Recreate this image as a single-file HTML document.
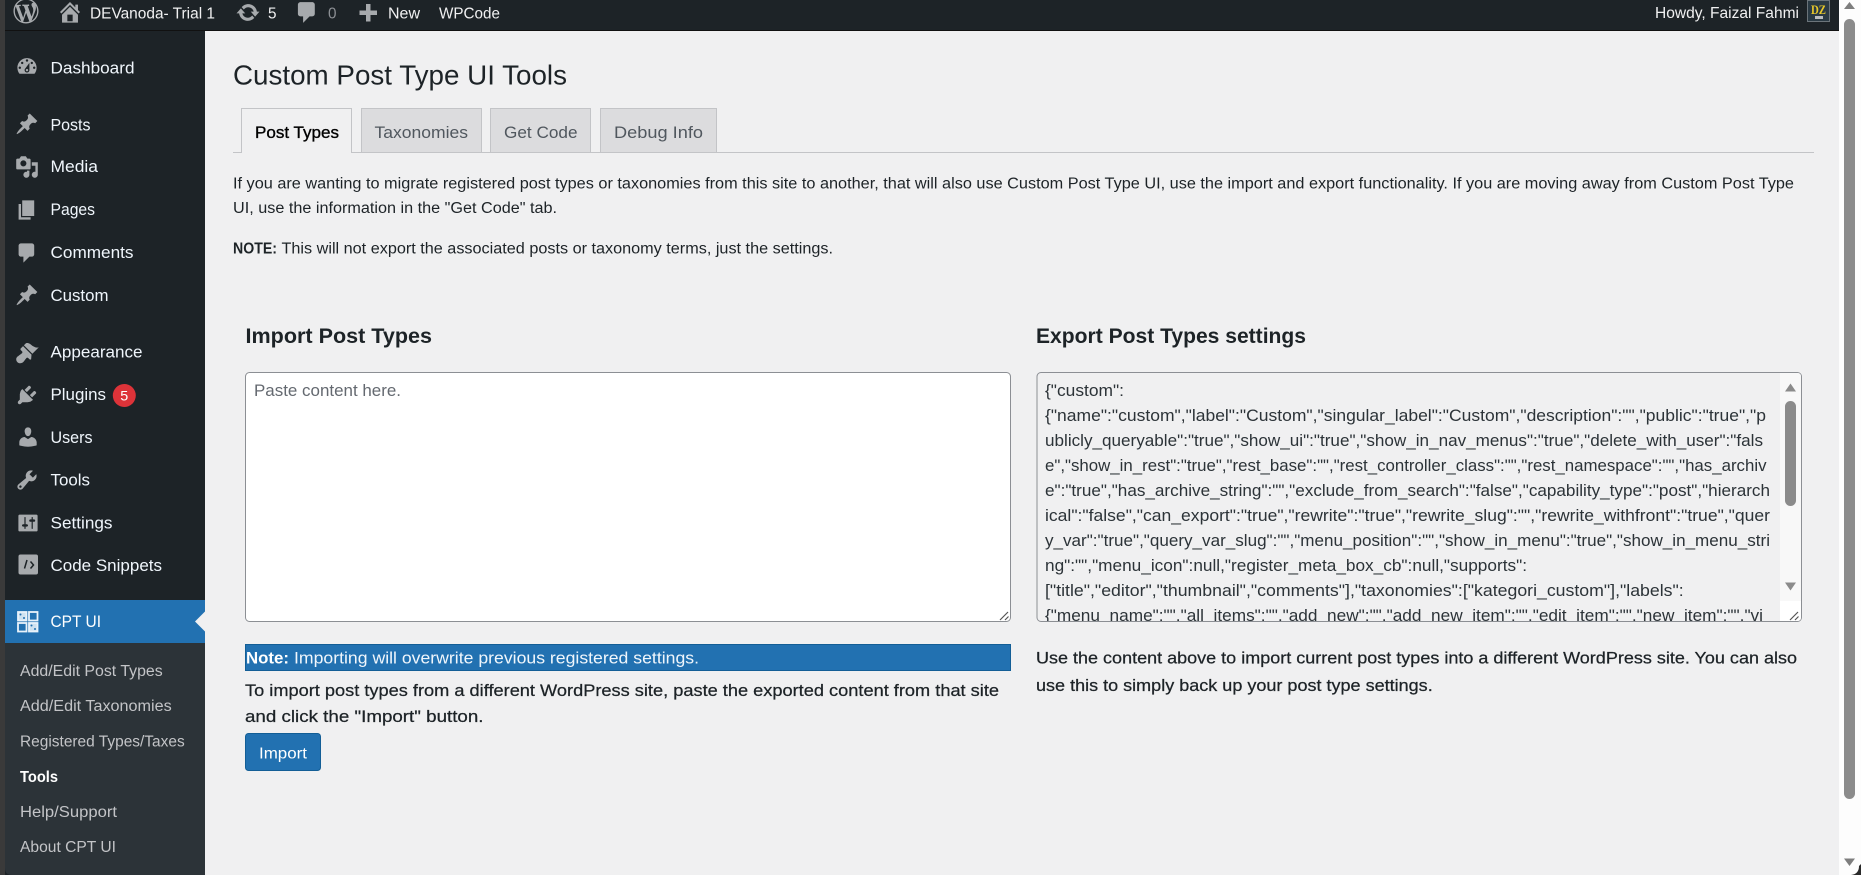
<!DOCTYPE html>
<html lang="en"><head><meta charset="utf-8"><title>Custom Post Type UI Tools</title>
<style>
html,body{margin:0;padding:0;width:1861px;height:875px;overflow:hidden;background:#f0f0f1}
svg{display:block;position:absolute;left:0;top:0}
text{font-family:"Liberation Sans",Arial,sans-serif;white-space:pre}
.m{font-size:17px;fill:#f0f6fc}
.s{font-size:15.5px;fill:#c3c4c7}
.a{font-size:15.5px;fill:#f0f0f1}
.p{font-size:15.5px;fill:#1d2327}
.t{font-size:17px;fill:#50575e}
.c{font-size:16.5px;fill:#2c3338}
.b{font-size:17px;fill:#1d2327}
.i{fill:#a7aaad}
</style></head><body>
<svg xmlns="http://www.w3.org/2000/svg" width="1861" height="875" viewBox="0 0 1861 875">
<defs><clipPath id="ta"><rect x="1038" y="373" width="742" height="248"/></clipPath></defs>
<rect width="1861" height="875" fill="#f0f0f1"/>
<!-- sidebar -->
<rect x="0" y="0" width="5" height="875" fill="#3a3a3a"/>
<rect x="5" y="0" width="200" height="875" fill="#1d2327"/>
<path d="M5 643H205V875H12Q5 875 5 868Z" fill="#2c3338"/>
<rect x="5" y="600" width="200" height="43" fill="#2271b1"/>
<path d="M205 611.500L195 621.500L205 631.500Z" fill="#f0f0f1"/>
<!-- admin bar -->
<rect x="5" y="0" width="1834" height="30.500" fill="#1d2327"/>
<rect x="5" y="30" width="1834" height="1" fill="#111"/>
<!-- admin bar icons -->
<svg x="13.500" y="-1.500" width="25" height="25" viewBox="0 0 20 20" class="i"><path d="M20 10c0-5.510-4.490-10-10-10C4.480 0 0 4.490 0 10c0 5.520 4.480 10 10 10 5.510 0 10-4.480 10-10zM7.780 15.370L4.370 6.220c.55-.02 1.170-.08 1.170-.08.5-.06.44-1.130-.06-1.110 0 0-1.450.11-2.370.11-.18 0-.37 0-.58-.01C4.120 2.690 6.890 1.030 10 1.030c2.320 0 4.430.87 6.020 2.340-.68-.11-1.650.39-1.650 1.580 0 .74.45 1.360.9 2.100.35.61.55 1.360.55 2.460 0 1.490-1.400 5-1.400 5l-3.030-8.370c.54-.02.82-.17.82-.17.5-.05.44-1.250-.06-1.220 0 0-1.440.12-2.380.12-.87 0-2.330-.12-2.330-.12-.5-.03-.56 1.200-.06 1.220l.92.08 1.260 3.410zM17.410 10c.24-.64.74-1.870.43-4.250.7 1.290 1.050 2.710 1.050 4.250 0 3.290-1.730 6.240-4.400 7.780.97-2.590 1.940-5.200 2.920-7.780zM6.100 18.090C3.120 16.650 1.110 13.530 1.110 10c0-1.300.23-2.480.72-3.590C3.250 10.300 4.670 14.200 6.100 18.090zm4.030-6.630l2.580 6.980c-.86.29-1.760.45-2.710.45-.79 0-1.570-.11-2.290-.33.81-2.380 1.620-4.740 2.420-7.100z"/></svg>
<svg x="56.700" y="-1.300" width="26.600" height="26.600" viewBox="0 0 20 20" class="i"><path d="M16 8.500l1.530 1.530-1.060 1.060L10 4.620l-6.470 6.470-1.060-1.060L10 2.500l4 4v-2h2v4zm-6-2.460l6 5.990V18H4v-5.970zM12 17v-5H8v5h4z"/></svg>
<svg x="235.500" y="0" width="25" height="25" viewBox="0 0 20 20" class="i"><path d="M10.200 3.280c3.530 0 6.430 2.610 6.920 6h2.080l-3.500 4-3.500-4h2.320c-.45-1.970-2.210-3.440-4.320-3.440-1.450 0-2.730.71-3.540 1.780L4.950 5.660C6.230 4.200 8.110 3.280 10.200 3.280zm-.4 13.440c-3.520 0-6.430-2.610-6.920-6H.8l3.500-4c1.170 1.330 2.330 2.670 3.500 4H5.480c.45 1.970 2.210 3.440 4.320 3.440 1.450 0 2.730-.71 3.540-1.780l1.710 1.950c-1.280 1.460-3.150 2.390-5.250 2.390z"/></svg>
<svg x="294" y="-0.500" width="26" height="26" viewBox="0 0 20 20" class="i"><path d="M5 2h9c1.100 0 2 .9 2 2v7c0 1.100-.9 2-2 2h-2l-5 5v-5H5c-1.100 0-2-.9-2-2V4c0-1.100.9-2 2-2z"/></svg>
<path d="M366 4h4.500v6.500H377v4.500h-6.500v6.500H366V15h-6.500v-4.500H366z" class="i"/>
<!-- admin bar text -->
<text class="a" x="90" y="18.500" textLength="125" lengthAdjust="spacingAndGlyphs">DEVanoda- Trial 1</text>
<text class="a" x="268" y="18.500" textLength="8.500" lengthAdjust="spacingAndGlyphs">5</text>
<text class="a" x="328" y="18.500" textLength="8.500" lengthAdjust="spacingAndGlyphs" style="fill:#8c8f94">0</text>
<text class="a" x="388" y="18.500" textLength="32" lengthAdjust="spacingAndGlyphs">New</text>
<text class="a" x="439" y="18.500" textLength="61" lengthAdjust="spacingAndGlyphs">WPCode</text>
<text class="a" x="1655" y="18" textLength="144" lengthAdjust="spacingAndGlyphs">Howdy, Faizal Fahmi</text>
<rect x="1807.500" y="0.500" width="22" height="21" fill="#2a3a44" stroke="#6b747a"/>
<text x="1811" y="14" style="font-family:'Liberation Serif',serif;font-weight:bold;font-size:13px;fill:#e8c92a" textLength="15" lengthAdjust="spacingAndGlyphs">DZ</text>
<rect x="1815" y="16" width="8" height="3" fill="#b9bcbe"/>
<!-- scrollbar -->
<rect x="1839" y="0" width="22" height="875" fill="#fdfdfd"/>
<rect x="1844" y="19" width="11" height="780" rx="5.500" fill="#8b8b8b"/>
<path d="M1849.500 2L1855 9H1844Z" fill="#7e7e7e"/>
<path d="M1844 858.500H1855L1849.500 866Z" fill="#7e7e7e"/>
<path d="M1861 864V875H1851Q1859 874 1859 866Z" fill="#2a2a2a"/>
<!-- menu icons -->
<g class="i">
<svg x="15" y="54.500" width="24" height="24" viewBox="0 0 20 20"><path d="M3.760 16h12.480c1.100-1.370 1.760-3.110 1.760-5 0-4.420-3.580-8-8-8s-8 3.580-8 8c0 1.890.66 3.630 1.760 5zM10 4c.55 0 1 .45 1 1s-.45 1-1 1-1-.45-1-1 .45-1 1-1zM6 6c.55 0 1 .45 1 1s-.45 1-1 1-1-.45-1-1 .45-1 1-1zm8 0c.55 0 1 .45 1 1s-.45 1-1 1-1-.45-1-1 .45-1 1-1zm-5.370 5.550L12 7v6c0 1.100-.9 2-2 2s-2-.9-2-2c0-.57.24-1.080.63-1.450zM4 10c.55 0 1 .45 1 1s-.45 1-1 1-1-.45-1-1 .45-1 1-1zm12 0c.55 0 1 .45 1 1s-.45 1-1 1-1-.45-1-1 .45-1 1-1zm-5 3c0-.55-.45-1-1-1s-1 .45-1 1 .45 1 1 1 1-.45 1-1z" fill-rule="evenodd"/></svg>
<svg x="15" y="112" width="24" height="24" viewBox="0 0 20 20"><path id="pin" d="M10.440 3.020l1.820-1.820 6.360 6.350-1.830 1.820c-1.050-.68-2.480-.57-3.410.36l-.75.75c-.92.93-1.040 2.350-.35 3.410l-1.830 1.820-2.410-2.410-2.800 2.790c-.42.42-3.380 2.710-3.800 2.290s1.860-3.390 2.280-3.810l2.790-2.790L4.100 9.360l1.830-1.820c1.050.69 2.480.57 3.400-.36l.75-.75c.93-.92 1.050-2.350.36-3.410z"/></svg>
<svg x="15" y="155" width="24" height="24" viewBox="0 0 20 20"><path d="M13 11V4c0-.55-.45-1-1-1h-1.670L9 1H5L3.670 3H2c-.55 0-1 .45-1 1v7c0 .55.45 1 1 1h10c.55 0 1-.45 1-1zM7 4.500c1.380 0 2.500 1.120 2.500 2.500S8.380 9.500 7 9.500 4.500 8.380 4.500 7 5.620 4.500 7 4.500zM14 6h5v10.500c0 1.380-1.120 2.500-2.500 2.500S14 17.880 14 16.500s1.120-2.500 2.500-2.500c.17 0 .34.020.5.050V9h-3V6zm-4 8.050V13h2v3.500c0 1.380-1.120 2.500-2.500 2.500S7 17.880 7 16.500 8.120 14 9.500 14c.17 0 .34.020.5.050z" fill-rule="evenodd"/></svg>
<svg x="15" y="198" width="24" height="24" viewBox="0 0 20 20"><path d="M6 15V2h10v13H6zm-1 1h8v2H3V5h2v11z"/></svg>
<svg x="15" y="241" width="24" height="24" viewBox="0 0 20 20"><path d="M5 2h9c1.100 0 2 .9 2 2v7c0 1.100-.9 2-2 2h-2l-5 5v-5H5c-1.100 0-2-.9-2-2V4c0-1.100.9-2 2-2z"/></svg>
<svg x="15" y="283" width="24" height="24" viewBox="0 0 20 20"><path d="M10.440 3.020l1.820-1.820 6.360 6.350-1.830 1.820c-1.050-.68-2.480-.57-3.410.36l-.75.75c-.92.93-1.040 2.350-.35 3.410l-1.830 1.820-2.410-2.410-2.800 2.790c-.42.42-3.380 2.710-3.800 2.290s1.860-3.390 2.280-3.810l2.790-2.790L4.100 9.360l1.830-1.820c1.050.69 2.480.57 3.400-.36l.75-.75c.93-.92 1.050-2.350.36-3.410z"/></svg>
<svg x="15" y="340.500" width="24" height="24" viewBox="0 0 20 20"><path d="M14.480 11.060L7.410 3.990l1.500-1.500c.5-.56 2.300-.47 3.510.32 1.210.8 1.430 1.280 2.910 2.100 1.180.64 2.450 1.260 4.450.85zm-.71.710L6.700 4.700 4.830 6.580c-.39.39-.39 1.020 0 1.410l1.060 1.060c.39.39.39 1.030 0 1.420-.6.600-1.430 1.110-2.210 1.690-.35.26-.7.530-1.010.84C1.430 13.710 1 14.650 1 15.650 1 17.500 2.500 19 4.350 19c.95 0 1.940-.43 2.670-1.170.31-.31.58-.66.84-1.010.58-.78 1.090-1.610 1.690-2.210.39-.39 1.030-.39 1.420 0l1.060 1.060c.39.39 1.020.39 1.410 0z"/></svg>
<svg x="15" y="383" width="24" height="24" viewBox="0 0 20 20"><path d="M13.110 4.360L9.870 7.600 8 5.730l3.240-3.240c.35-.34 1.050-.2 1.560.32.52.51.66 1.210.31 1.550zm-8 1.770l.91-1.120 9.010 9.010-1.190.84c-.71.71-2.630 1.160-3.820 1.160H6.140L4.900 17.260c-.59.590-1.540.590-2.120 0-.59-.58-.59-1.530 0-2.120l1.240-1.240v-3.880c0-1.130.52-3.130 1.090-3.890zm7.260 3.970l3.240-3.240c.34-.35 1.040-.21 1.550.31.52.51.66 1.210.32 1.560l-3.240 3.240z"/></svg>
<svg x="16" y="425" width="24" height="24" viewBox="0 0 20 20"><path d="M10 9.250c-2.270 0-2.730-3.440-2.730-3.440C7 4.020 7.820 2 9.970 2c2.160 0 2.980 2.020 2.710 3.810 0 0-.41 3.440-2.680 3.440zm0 2.570L12.720 10c2.390 0 4.520 2.330 4.520 4.530v2.490s-3.650 1.130-7.240 1.130c-3.650 0-7.240-1.130-7.240-1.130v-2.490c0-2.250 1.940-4.480 4.470-4.480z"/></svg>
<svg x="15" y="468" width="24" height="24" viewBox="0 0 20 20"><path d="M16.680 9.770c-1.340 1.340-3.300 1.670-4.950.99l-5.410 6.520c-.99.99-2.590.99-3.570 0-.99-.98-.99-2.580 0-3.570l6.520-5.420c-.68-1.650-.35-3.610.99-4.950 1.280-1.280 3.120-1.620 4.720-1.060l-2.890 2.890 2.820 2.820 2.860-2.870c.53 1.580.18 3.400-1.090 4.650zM3.810 16.210c.4.390 1.030.39 1.420 0 .4-.4.4-1.030 0-1.430-.39-.39-1.020-.39-1.420 0-.39.4-.39 1.030 0 1.430z" fill-rule="evenodd"/></svg>
<svg x="16" y="511" width="24" height="24" viewBox="0 0 20 20"><path d="M18 16V4c0-.55-.45-1-1-1H3c-.55 0-1 .45-1 1v12c0 .55.45 1 1 1h14c.55 0 1-.45 1-1zM8 11h1c.55 0 1 .45 1 1s-.45 1-1 1H8v1.500c0 .28-.22.5-.5.5s-.5-.22-.5-.5V13H6c-.55 0-1-.45-1-1s.45-1 1-1h1V5.500c0-.28.22-.5.5-.5s.5.22.5.5V11zm5-2h-1c-.55 0-1-.45-1-1s.45-1 1-1h1V5.500c0-.28.22-.5.5-.5s.5.22.5.5V7h1c.55 0 1 .45 1 1s-.45 1-1 1h-1v5.500c0 .28-.22.5-.5.5s-.5-.22-.5-.5V9z" fill-rule="evenodd"/></svg>
<rect x="18.500" y="554.500" width="19.500" height="20" rx="2"/>
</g>
<path d="M27 560l-2.500 8.500M30.500 561.500l3 3.500-3 3.500" stroke="#1d2327" stroke-width="1.500" fill="none"/>
<!-- CPT UI icon -->
<g fill="none" stroke="#e8f2fa" stroke-width="1.800">
<rect x="18" y="612" width="8.500" height="8.500" fill="#cfe2f0"/><rect x="29" y="612" width="8.500" height="8.500"/>
<rect x="18" y="623" width="8.500" height="8.500"/><rect x="29" y="623" width="8.500" height="8.500" fill="#cfe2f0"/>
</g>
<g fill="#2271b1"><circle cx="20.500" cy="614.500" r="1"/><circle cx="24" cy="618" r="1"/><circle cx="31.500" cy="625.500" r="1"/><circle cx="35" cy="629" r="1"/></g>
<!-- menu text -->
<text class="m" x="50.500" y="73.500" textLength="84" lengthAdjust="spacingAndGlyphs">Dashboard</text>
<text class="m" x="50.500" y="130.500" textLength="40" lengthAdjust="spacingAndGlyphs">Posts</text>
<text class="m" x="50.500" y="172" textLength="47.500" lengthAdjust="spacingAndGlyphs">Media</text>
<text class="m" x="50.500" y="215" textLength="44.500" lengthAdjust="spacingAndGlyphs">Pages</text>
<text class="m" x="50.500" y="258" textLength="83" lengthAdjust="spacingAndGlyphs">Comments</text>
<text class="m" x="50.500" y="301" textLength="58" lengthAdjust="spacingAndGlyphs">Custom</text>
<text class="m" x="50.500" y="357.500" textLength="92" lengthAdjust="spacingAndGlyphs">Appearance</text>
<text class="m" x="50.500" y="400" textLength="55.500" lengthAdjust="spacingAndGlyphs">Plugins</text>
<circle cx="124.300" cy="395.500" r="11.500" fill="#dd3339"/>
<text x="120.300" y="400.500" style="font-size:13.500px;fill:#fff" textLength="8" lengthAdjust="spacingAndGlyphs">5</text>
<text class="m" x="50.500" y="443" textLength="42" lengthAdjust="spacingAndGlyphs">Users</text>
<text class="m" x="50.500" y="485.500" textLength="39.500" lengthAdjust="spacingAndGlyphs">Tools</text>
<text class="m" x="50.500" y="528.500" textLength="62" lengthAdjust="spacingAndGlyphs">Settings</text>
<text class="m" x="50.500" y="571" textLength="111.500" lengthAdjust="spacingAndGlyphs">Code Snippets</text>
<text class="m" x="50.500" y="627" textLength="50.500" lengthAdjust="spacingAndGlyphs" style="fill:#fff">CPT UI</text>
<text class="s" x="20" y="676" textLength="142.700" lengthAdjust="spacingAndGlyphs">Add/Edit Post Types</text>
<text class="s" x="20" y="711" textLength="151.700" lengthAdjust="spacingAndGlyphs">Add/Edit Taxonomies</text>
<text class="s" x="20" y="746.500" textLength="164.700" lengthAdjust="spacingAndGlyphs">Registered Types/Taxes</text>
<text class="s" x="20" y="782" textLength="38" lengthAdjust="spacingAndGlyphs" style="fill:#fff;font-weight:bold">Tools</text>
<text class="s" x="20" y="817" textLength="97" lengthAdjust="spacingAndGlyphs">Help/Support</text>
<text class="s" x="20" y="852" textLength="96" lengthAdjust="spacingAndGlyphs">About CPT UI</text>
<!-- heading -->
<text x="233" y="84.500" style="font-size:27.500px;fill:#1d2327" textLength="334" lengthAdjust="spacingAndGlyphs">Custom Post Type UI Tools</text>
<!-- tabs -->
<rect x="233" y="152" width="1581" height="1" fill="#c3c4c7"/>
<rect x="241.500" y="108.500" width="110" height="45" fill="#f0f0f1" stroke="none"/>
<path d="M241.500 153V108.500H351.500V153" fill="none" stroke="#c3c4c7"/>
<rect x="361.500" y="108.500" width="120" height="44" fill="#dcdcde" stroke="#c3c4c7"/>
<rect x="490.500" y="108.500" width="100" height="44" fill="#dcdcde" stroke="#c3c4c7"/>
<rect x="600.500" y="108.500" width="116" height="44" fill="#dcdcde" stroke="#c3c4c7"/>
<text x="255" y="138" style="font-size:17px;fill:#000;stroke:#000;stroke-width:.35" textLength="84" lengthAdjust="spacingAndGlyphs">Post Types</text>
<text class="t" x="374.500" y="138" textLength="93.500" lengthAdjust="spacingAndGlyphs">Taxonomies</text>
<text class="t" x="504" y="138" textLength="73.500" lengthAdjust="spacingAndGlyphs">Get Code</text>
<text class="t" x="614" y="138" textLength="89" lengthAdjust="spacingAndGlyphs">Debug Info</text>
<!-- paragraphs -->
<text class="p" x="233" y="188.500" textLength="1561" lengthAdjust="spacingAndGlyphs">If you are wanting to migrate registered post types or taxonomies from this site to another, that will also use Custom Post Type UI, use the import and export functionality. If you are moving away from Custom Post Type</text>
<text class="p" x="233" y="213" textLength="324" lengthAdjust="spacingAndGlyphs">UI, use the information in the "Get Code" tab.</text>
<text class="p" x="233" y="253.500" textLength="44" lengthAdjust="spacingAndGlyphs" style="font-weight:bold">NOTE:</text>
<text class="p" x="281.500" y="253.500" textLength="551.500" lengthAdjust="spacingAndGlyphs">This will not export the associated posts or taxonomy terms, just the settings.</text>
<!-- section headings -->
<text x="245.500" y="343" style="font-size:21.500px;font-weight:bold;fill:#1d2327" textLength="186.500" lengthAdjust="spacingAndGlyphs">Import Post Types</text>
<text x="1036" y="343" style="font-size:21.500px;font-weight:bold;fill:#1d2327" textLength="270" lengthAdjust="spacingAndGlyphs">Export Post Types settings</text>
<!-- left textarea -->
<rect x="245.500" y="372.500" width="765" height="249" rx="4" fill="#fff" stroke="#8c8f94"/>
<text x="254" y="396" style="font-size:17px;fill:#646970" textLength="147" lengthAdjust="spacingAndGlyphs">Paste content here.</text>
<path d="M1000 620l8-8M1005 620l3.500-3.500" stroke="#555" stroke-width="1.200" fill="none"/>
<!-- right textarea -->
<rect x="1037" y="372.500" width="764.500" height="249" rx="4" fill="#f0f0f1" stroke="#8c8f94"/>
<g clip-path="url(#ta)">
<text class="c" x="1045" y="396" textLength="79" lengthAdjust="spacingAndGlyphs">{"custom":</text>
<text class="c" x="1045" y="421" textLength="721" lengthAdjust="spacingAndGlyphs">{"name":"custom","label":"Custom","singular_label":"Custom","description":"","public":"true","p</text>
<text class="c" x="1045" y="446" textLength="718" lengthAdjust="spacingAndGlyphs">ublicly_queryable":"true","show_ui":"true","show_in_nav_menus":"true","delete_with_user":"fals</text>
<text class="c" x="1045" y="471" textLength="721.500" lengthAdjust="spacingAndGlyphs">e","show_in_rest":"true","rest_base":"","rest_controller_class":"","rest_namespace":"","has_archiv</text>
<text class="c" x="1045" y="496" textLength="725" lengthAdjust="spacingAndGlyphs">e":"true","has_archive_string":"","exclude_from_search":"false","capability_type":"post","hierarch</text>
<text class="c" x="1045" y="521" textLength="725" lengthAdjust="spacingAndGlyphs">ical":"false","can_export":"true","rewrite":"true","rewrite_slug":"","rewrite_withfront":"true","quer</text>
<text class="c" x="1045" y="546" textLength="725" lengthAdjust="spacingAndGlyphs">y_var":"true","query_var_slug":"","menu_position":"","show_in_menu":"true","show_in_menu_stri</text>
<text class="c" x="1045" y="571" textLength="482" lengthAdjust="spacingAndGlyphs">ng":"","menu_icon":null,"register_meta_box_cb":null,"supports":</text>
<text class="c" x="1045" y="596" textLength="638.700" lengthAdjust="spacingAndGlyphs">["title","editor","thumbnail","comments"],"taxonomies":["kategori_custom"],"labels":</text>
<text class="c" x="1045" y="621" textLength="718" lengthAdjust="spacingAndGlyphs">{"menu_name":"","all_items":"","add_new":"","add_new_item":"","edit_item":"","new_item":"","vi</text>
</g>
<path d="M1780 373H1797.500Q1801 373 1801 376.500V601H1780Z" fill="#f8f8f8"/>
<rect x="1785" y="401" width="11" height="105" rx="5.500" fill="#8b8b8b"/>
<path d="M1790.500 383.500L1796 391.500H1785Z" fill="#8b8b8b"/>
<path d="M1785 582.500H1796L1790.500 590.500Z" fill="#8b8b8b"/>
<path d="M1780 601H1801V617.500Q1801 621 1797.500 621H1780Z" fill="#fff"/>
<path d="M1790 620l8-8M1795 620l3.500-3.500" stroke="#555" stroke-width="1.200" fill="none"/>
<!-- note -->
<rect x="245.500" y="644.500" width="765" height="26" fill="#2271b1" stroke="#135e96"/>
<text x="246" y="663.500" style="font-size:16.500px;font-weight:bold;fill:#fff" textLength="43" lengthAdjust="spacingAndGlyphs">Note:</text>
<text x="294" y="663.500" style="font-size:16.500px;fill:#f0f6fc" textLength="405" lengthAdjust="spacingAndGlyphs">Importing will overwrite previous registered settings.</text>
<text class="b" x="245" y="696" textLength="754" lengthAdjust="spacingAndGlyphs" style="stroke:#1d2327;stroke-width:.25">To import post types from a different WordPress site, paste the exported content from that site</text>
<text class="b" x="245" y="722" textLength="238.500" lengthAdjust="spacingAndGlyphs" style="stroke:#1d2327;stroke-width:.25">and click the "Import" button.</text>
<rect x="245.500" y="733.500" width="75" height="37" rx="3" fill="#2271b1" stroke="#135e96"/>
<text x="259" y="758.500" style="font-size:15.500px;fill:#fff" textLength="48" lengthAdjust="spacingAndGlyphs">Import</text>
<text class="b" x="1036" y="663.500" textLength="761" lengthAdjust="spacingAndGlyphs" style="stroke:#1d2327;stroke-width:.25">Use the content above to import current post types into a different WordPress site. You can also</text>
<text class="b" x="1036" y="691" textLength="396.700" lengthAdjust="spacingAndGlyphs" style="stroke:#1d2327;stroke-width:.25">use this to simply back up your post type settings.</text>
</svg>
</body></html>
